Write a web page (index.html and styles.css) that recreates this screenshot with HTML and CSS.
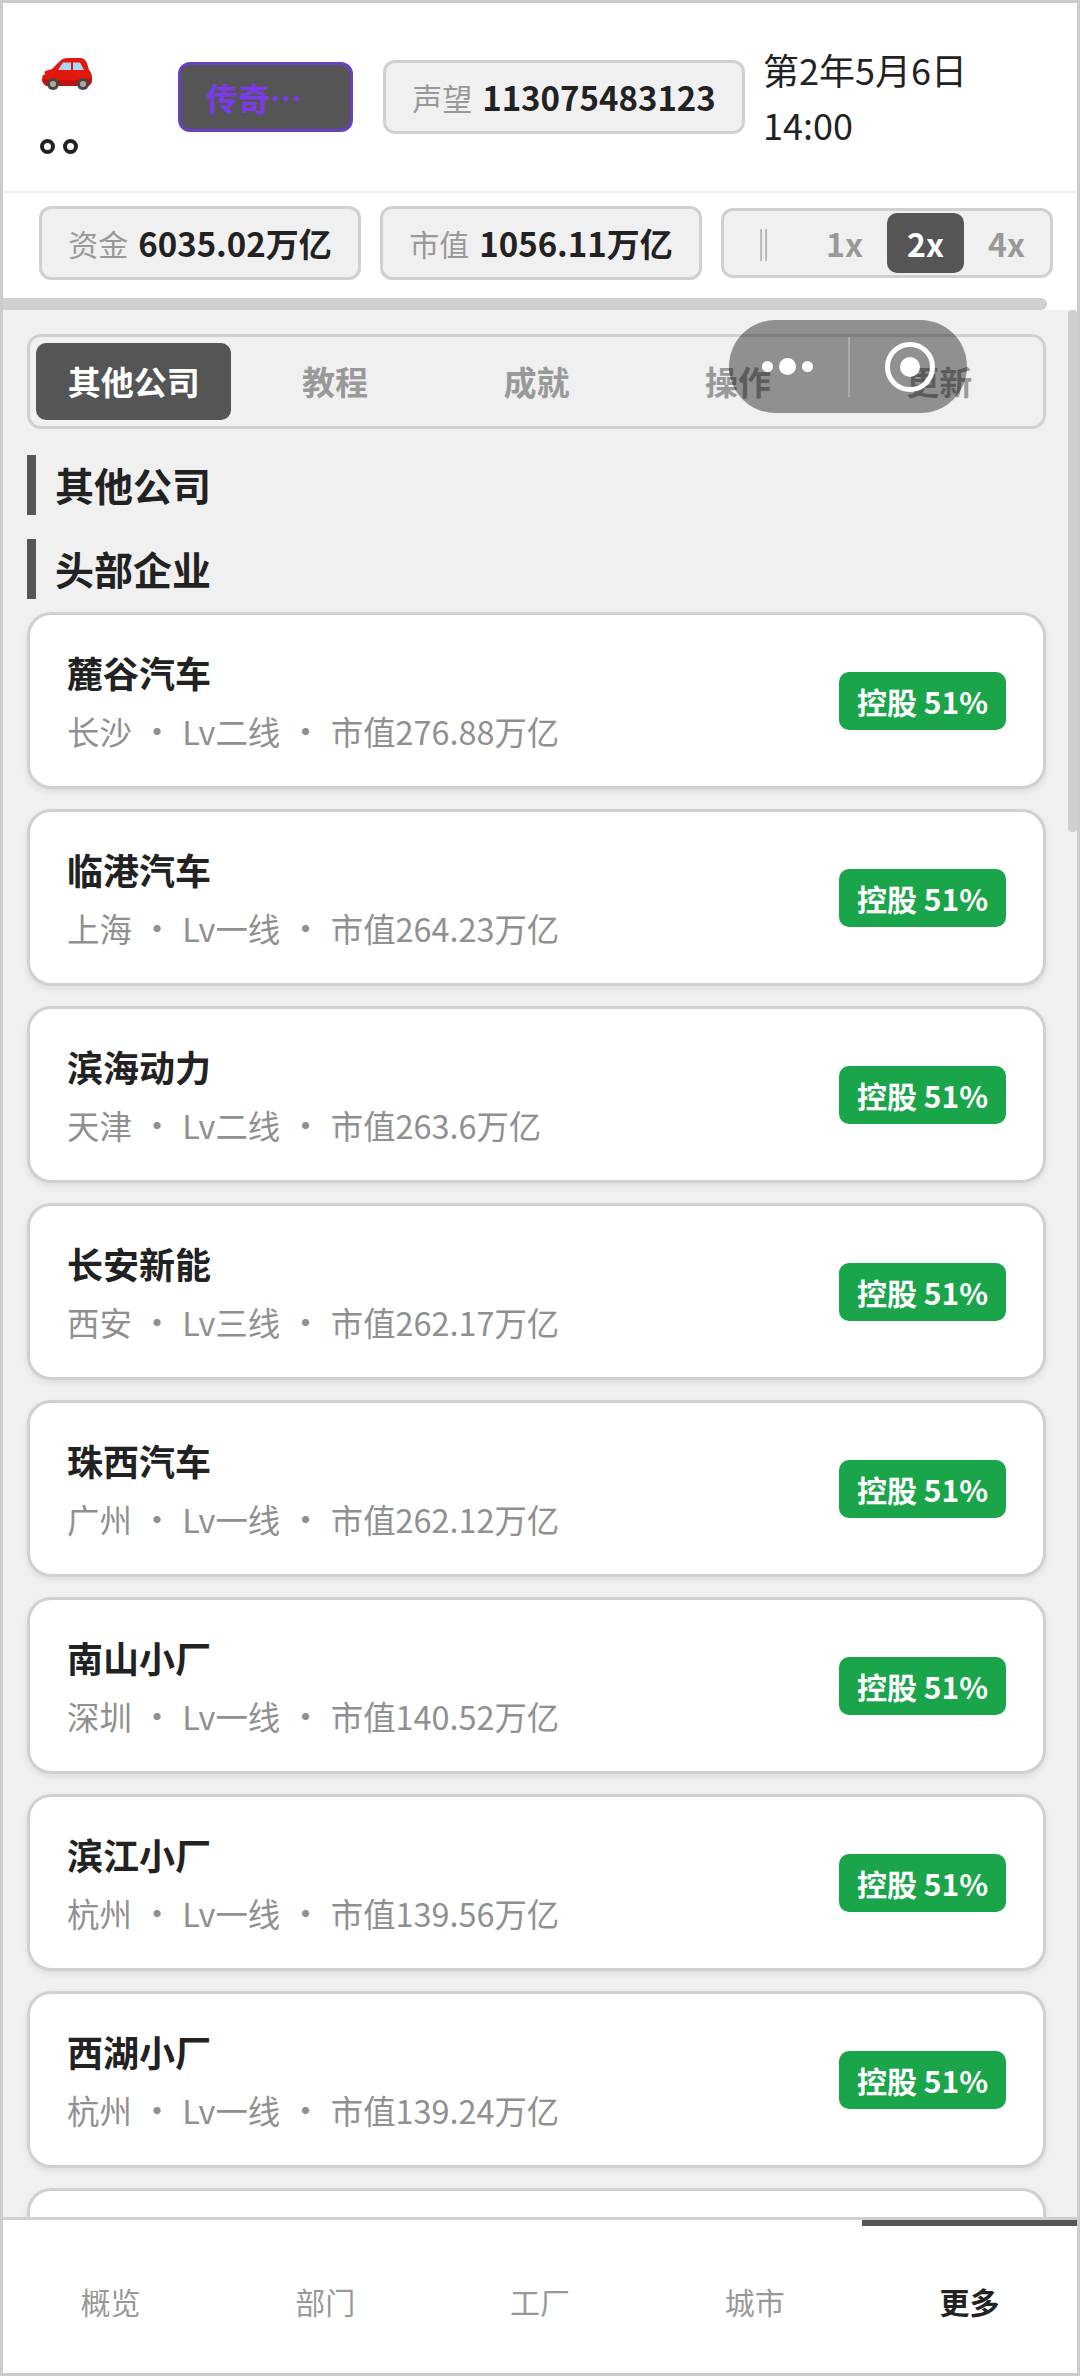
FILE: index.html
```html
<!DOCTYPE html>
<html lang="zh-CN">
<head>
    <meta charset="UTF-8">
    <meta name="viewport" content="width=device-width, initial-scale=1.0">
    <title>其他公司</title>
    <link rel="stylesheet" href="styles.css">
</head>
<body>
    <div class="page">
        <header class="top-row">
            <div class="brand">
                <svg class="car" viewBox="0 0 50 33" width="50" height="33" aria-hidden="true">
                    <path d="M1 16 C2 13 6 12 10 11 L18 3 C20 1 22 0 26 0 L38 0 C41 0 43 1 45 5 L47 12 C49 14 50 16 50 20 C50 25 49 27 46 28 L5 28 C2 27 0 24 0 21 Z" fill="#e2170f"/>
                    <path d="M0 21 C14 23 36 23 50 20 C50 25 49 27 46 28 L5 28 C2 27 0 24 0 21 Z" fill="#bf1210"/>
                    <path d="M16 12 L21 4.5 L29 4.5 L29 12 Z" fill="#a5d8f3"/>
                    <path d="M31 4.5 L38 4.5 L42 12 L31 12 Z" fill="#a5d8f3"/>
                    <circle cx="1.5" cy="15.5" r="1.5" fill="#fff"/>
                    <circle cx="11" cy="26" r="6" fill="#4a4440"/>
                    <circle cx="11" cy="26" r="3" fill="#b0aaa2"/>
                    <circle cx="41" cy="26" r="6" fill="#4a4440"/>
                    <circle cx="41" cy="26" r="3" fill="#b0aaa2"/>
                </svg>
                <div class="rings"><span class="ring"></span><span class="ring"></span></div>
            </div>
            <div class="rank">传奇…</div>
            <div class="chip chip-fame"><span class="chip-label">声望</span> <b>113075483123</b></div>
            <div class="date">第2年5月6日<br>14:00</div>
        </header>

        <section class="stat-row">
            <div class="chip chip-money"><span class="chip-label">资金</span> <b>6035.02万亿</b></div>
            <div class="chip chip-money"><span class="chip-label">市值</span> <b>1056.11万亿</b></div>
            <div class="speed">
                <span class="speed-item speed-pause">‖</span>
                <span class="speed-item">1x</span>
                <span class="speed-item active">2x</span>
                <span class="speed-item">4x</span>
            </div>
        </section>
        <div class="progress"></div>

        <main class="content">
            <nav class="tabs">
                <span class="tab active">其他公司</span>
                <span class="tab">教程</span>
                <span class="tab">成就</span>
                <span class="tab">操作</span>
                <span class="tab">更新</span>
            </nav>

            <h2 class="section-title">其他公司</h2>
            <h2 class="section-title">头部企业</h2>

            <ul class="company-list">
                <li class="company">
                    <div><div class="company-name">麓谷汽车</div><div class="company-meta">长沙 <i>•</i> Lv二线 <i>•</i> 市值276.88万亿</div></div>
                    <span class="badge">控股 51%</span>
                </li>
                <li class="company">
                    <div><div class="company-name">临港汽车</div><div class="company-meta">上海 <i>•</i> Lv一线 <i>•</i> 市值264.23万亿</div></div>
                    <span class="badge">控股 51%</span>
                </li>
                <li class="company">
                    <div><div class="company-name">滨海动力</div><div class="company-meta">天津 <i>•</i> Lv二线 <i>•</i> 市值263.6万亿</div></div>
                    <span class="badge">控股 51%</span>
                </li>
                <li class="company">
                    <div><div class="company-name">长安新能</div><div class="company-meta">西安 <i>•</i> Lv三线 <i>•</i> 市值262.17万亿</div></div>
                    <span class="badge">控股 51%</span>
                </li>
                <li class="company">
                    <div><div class="company-name">珠西汽车</div><div class="company-meta">广州 <i>•</i> Lv一线 <i>•</i> 市值262.12万亿</div></div>
                    <span class="badge">控股 51%</span>
                </li>
                <li class="company">
                    <div><div class="company-name">南山小厂</div><div class="company-meta">深圳 <i>•</i> Lv一线 <i>•</i> 市值140.52万亿</div></div>
                    <span class="badge">控股 51%</span>
                </li>
                <li class="company">
                    <div><div class="company-name">滨江小厂</div><div class="company-meta">杭州 <i>•</i> Lv一线 <i>•</i> 市值139.56万亿</div></div>
                    <span class="badge">控股 51%</span>
                </li>
                <li class="company">
                    <div><div class="company-name">西湖小厂</div><div class="company-meta">杭州 <i>•</i> Lv一线 <i>•</i> 市值139.24万亿</div></div>
                    <span class="badge">控股 51%</span>
                </li>
                <li class="company"></li>
            </ul>
            <div class="scrollbar"></div>
        </main>

        <footer class="bottom-nav">
            <span class="nav-item">概览</span>
            <span class="nav-item">部门</span>
            <span class="nav-item">工厂</span>
            <span class="nav-item">城市</span>
            <span class="nav-item active">更多</span>
        </footer>

        <!-- mini program capsule sits over the tabs -->
        <div class="capsule">
            <div class="capsule-dots"><span></span><span></span><span></span></div>
            <div class="capsule-line"></div>
            <div class="capsule-target"><span></span></div>
        </div>
    </div>
</body>
</html>
```

FILE: styles.css
```css
* {
    box-sizing: border-box;
}

body {
    margin: 0;
    background: #fff;
    color: #222;
    font-family: "Noto Sans CJK SC", "Noto Sans", sans-serif;
}

.page {
    position: relative;
    width: 1080px;
    height: 2376px;
    border: 3px solid #ccc;
    display: flex;
    flex-direction: column;
    overflow: hidden;
}

.top-row {
    height: 190px;
    flex: none;
    display: flex;
    align-items: center;
    padding-left: 37px;
    border-bottom: 2px solid #f0f0f0;
}

.brand {
    width: 138px;
    flex: none;
    height: 130px;
    padding-top: 26px;
}

.car {
    display: block;
    margin-left: 2px;
}

.rings {
    display: flex;
    gap: 8px;
    margin-top: 48px;
}

.ring {
    width: 15px;
    height: 15px;
    border: 4px solid #222;
    border-radius: 50%;
}

.rank {
    width: 175px;
    height: 70px;
    flex: none;
    padding-left: 25px;
    line-height: 64px;
    font-size: 32px;
    font-weight: 700;
    color: #7c3aed;
    background: #555;
    border: 3px solid #6b3fc4;
    border-radius: 12px;
}

.chip {
    height: 74px;
    display: flex;
    align-items: center;
    justify-content: center;
    gap: 10px;
    font-size: 33px;
    background: #f0f0f0;
    border: 3px solid #d0d0d0;
    border-radius: 12px;
}

.chip b {
    font-weight: 700;
    color: #222;
}

.chip-label {
    color: #999;
    font-size: 30px;
}

.chip-fame {
    width: 362px;
    margin-left: 30px;
    flex: none;
}

.date {
    margin-left: 18px;
    font-size: 36px;
    line-height: 55px;
    color: #222;
}

.stat-row {
    height: 105px;
    flex: none;
    display: flex;
    align-items: center;
    padding: 0 24px 5px 36px;
}

.chip-money {
    width: 322px;
    margin-right: 19px;
}

.speed {
    width: 332px;
    height: 70px;
    display: flex;
    gap: 4px;
    padding: 2px 5px 2px 1px;
    background: #f0f0f0;
    border: 3px solid #d0d0d0;
    border-radius: 12px;
}

.speed-item {
    flex: 1;
    text-align: center;
    line-height: 60px;
    font-size: 32px;
    font-weight: 700;
    color: #999;
    border-radius: 10px;
}

.speed-item.active {
    background: #555;
    color: #fff;
}

.speed-pause {
    font-weight: 400;
}

.progress {
    flex: none;
    height: 12px;
    width: 1044px;
    background: #d0d0d0;
    border-radius: 0 6px 6px 0;
}

.content {
    position: relative;
    flex: 1;
    min-height: 0;
    overflow: hidden;
    padding: 24px 31px 0 24px;
    background: #f0f0f0;
}

.tabs {
    height: 95px;
    display: flex;
    gap: 6px;
    padding: 6px;
    margin-bottom: 26px;
    background: #f0f0f0;
    border: 3px solid #d0d0d0;
    border-radius: 14px;
}

.tab {
    flex: 1;
    text-align: center;
    line-height: 76px;
    font-size: 33px;
    font-weight: 700;
    color: #999;
    border-radius: 10px;
}

.tab.active {
    background: #555;
    color: #fff;
}

.section-title {
    height: 60px;
    margin: 0 0 24px;
    padding-left: 19px;
    line-height: 58px;
    font-size: 39px;
    font-weight: 700;
    color: #222;
    border-left: 9px solid #555;
}

.company-list {
    list-style: none;
    margin: -11px 0 0;
    padding: 0;
}

.company {
    height: 177px;
    margin-bottom: 20px;
    padding: 0 37px;
    display: flex;
    align-items: center;
    justify-content: space-between;
    background: #fff;
    border: 3px solid #d0d0d0;
    border-radius: 24px;
    box-shadow: 0 3px 6px rgba(0, 0, 0, 0.08);
}

.company-name {
    font-size: 36px;
    font-weight: 700;
    line-height: 50px;
    color: #222;
}

.company-meta {
    margin-top: 11px;
    font-size: 32.4px;
    line-height: 46px;
    color: #909090;
    white-space: nowrap;
}

.company-meta i {
    display: inline-block;
    width: 36px;
    text-align: center;
    font-style: normal;
    font-size: 34px;
}

.badge {
    width: 167px;
    height: 58px;
    line-height: 58px;
    text-align: center;
    font-size: 30px;
    font-weight: 700;
    color: #fff;
    background: #1aa54b;
    border-radius: 10px;
}

.scrollbar {
    position: absolute;
    top: 0;
    right: 0;
    width: 9px;
    height: 522px;
    background: #cfcfcf;
    border-radius: 4px;
}

.bottom-nav {
    position: relative;
    flex: none;
    height: 156px;
    display: flex;
    background: #fff;
    border-top: 3px solid #d0d0d0;
}

.nav-item {
    flex: 1;
    text-align: center;
    line-height: 163px;
    font-size: 30px;
    color: #999;
}

.nav-item.active {
    font-weight: 700;
    color: #222;
    border-top: 6px solid #555;
    line-height: 151px;
}

.capsule {
    position: absolute;
    left: 726px;
    top: 317px;
    width: 238px;
    height: 93px;
    display: flex;
    align-items: center;
    background: rgba(0, 0, 0, 0.4);
    border-radius: 47px;
}

.capsule-dots {
    width: 119px;
    padding-right: 3px;
    display: flex;
    align-items: center;
    justify-content: center;
    gap: 6px;
}

.capsule-dots span {
    width: 11px;
    height: 11px;
    background: #fff;
    border-radius: 50%;
}

.capsule-dots span:nth-child(2) {
    width: 17px;
    height: 17px;
}

.capsule-line {
    width: 2px;
    height: 60px;
    background: rgba(255, 255, 255, 0.25);
}

.capsule-target {
    width: 50px;
    height: 50px;
    margin-left: 35px;
    display: flex;
    align-items: center;
    justify-content: center;
    border: 5px solid #fff;
    border-radius: 50%;
}

.capsule-target span {
    width: 20px;
    height: 20px;
    background: #fff;
    border-radius: 50%;
}
```
